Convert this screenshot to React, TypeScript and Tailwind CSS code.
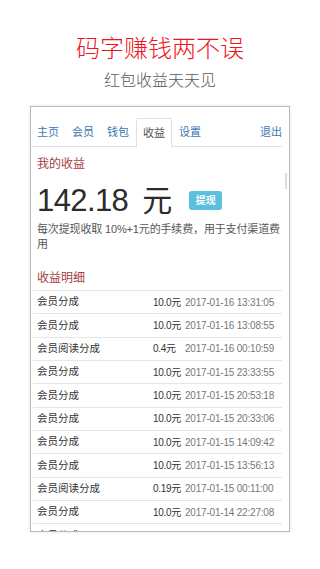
import React from 'react';

const tabs = ['主页', '会员', '钱包', '收益', '设置'];

const rows = [
    { name: '会员分成', amount: '10.0元', time: '2017-01-16 13:31:05' },
    { name: '会员分成', amount: '10.0元', time: '2017-01-16 13:08:55' },
    { name: '会员阅读分成', amount: '0.4元', time: '2017-01-16 00:10:59' },
    { name: '会员分成', amount: '10.0元', time: '2017-01-15 23:33:55' },
    { name: '会员分成', amount: '10.0元', time: '2017-01-15 20:53:18' },
    { name: '会员分成', amount: '10.0元', time: '2017-01-15 20:33:06' },
    { name: '会员分成', amount: '10.0元', time: '2017-01-15 14:09:42' },
    { name: '会员分成', amount: '10.0元', time: '2017-01-15 13:56:13' },
    { name: '会员阅读分成', amount: '0.19元', time: '2017-01-15 00:11:00' },
    { name: '会员分成', amount: '10.0元', time: '2017-01-14 22:27:08' },
    { name: '会员分成', amount: '10.0元', time: '2017-01-14 20:12:44' },
];

const font = { fontFamily: '"Liberation Sans", "Noto Sans CJK SC", sans-serif' };

const App = () => {
    return (
        <div className="w-[320px] h-[569px] bg-white overflow-hidden flex flex-col items-center" style={font}>
            {/* headline */}
            <h1 className="mt-[35px] text-[24px] leading-[28px] text-[#f2141c] font-light">码字赚钱两不误</h1>
            <p className="mt-[8px] text-[16px] leading-[20px] text-[#5a5a5a] font-light">红包收益天天见</p>

            {/* phone screen */}
            <div className="relative mt-[15px] w-[260px] h-[426px] border border-[#b9b9b9] shadow-[0_0_3px_rgba(0,0,0,0.12)] overflow-hidden">
                <div className="absolute right-[2px] top-[66px] w-[2px] h-[16px] bg-[#dcdcdc]" />

                <nav className="mt-[11px] mr-[7px] flex items-end border-b border-[#e0e0e0] h-[29px]">
                    {tabs.map((t) => (
                        <span
                            key={t}
                            className={
                                t === '收益'
                                    ? 'mr-[1px] px-[6px] h-[29px] -mb-[1px] flex items-center text-[11px] text-[#555] bg-white border border-b-0 border-[#e0e0e0] rounded-t-[2px]'
                                    : 'mr-[1px] px-[6px] h-[28px] flex items-center text-[11px] text-[#3a78b3]'
                            }
                        >
                            {t}
                        </span>
                    ))}
                    <span className="ml-auto h-[28px] flex items-center text-[11px] text-[#3a78b3]">退出</span>
                </nav>

                <div className="pl-[6px] pr-[7px]">
                    <h3 className="mt-[10px] text-[12px] leading-[14px] text-[#a4403d]">我的收益</h3>

                    <div className="mt-[12px] flex items-center">
                        <span className="text-[31px] leading-[36px] text-[#2b2b2b] tracking-[-0.6px]">142.18</span>
                        <span className="ml-[14px] text-[30px] leading-[36px] text-[#2b2b2b]">元</span>
                        <button className="ml-[17px] mt-[-2px] w-[33px] h-[19px] rounded-[3px] bg-[#5bbfde] text-white text-[10px] font-bold flex items-center justify-center">提现</button>
                    </div>

                    <p className="mt-[3px] text-[11px] leading-[14.5px] text-[#555] whitespace-nowrap tracking-[-0.15px]">
                        每次提现收取 10%+1元的手续费，用于支付渠道费
                        <br />用
                    </p>

                    <h3 className="mt-[20px] text-[12px] leading-[14px] text-[#a4403d]">收益明细</h3>

                    <div className="mt-[5px] -ml-[4px]">
                        {rows.map((r, i) => (
                            <div key={i} className="h-[23.33px] border-t border-[#e6e6e6] flex items-center pl-[4px] text-[10.5px]">
                                <span className="w-[116px] text-[#333]">{r.name}</span>
                                <span className="w-[32px] text-[#333] text-[10px] tracking-[-0.3px]">{r.amount}</span>
                                <span className="text-[#777] text-[10px] tracking-[-0.2px]">{r.time}</span>
                            </div>
                        ))}
                    </div>
                </div>
            </div>
        </div>
    );
};

export default App;
